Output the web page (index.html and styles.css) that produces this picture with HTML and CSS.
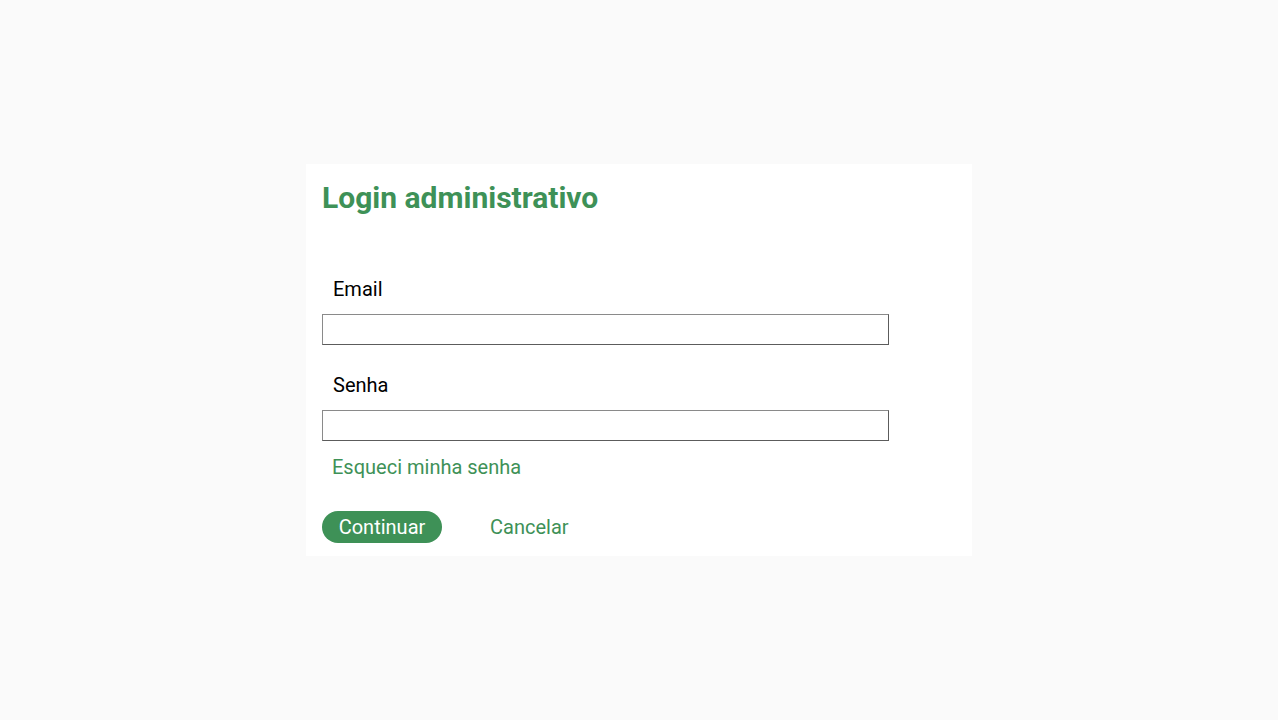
FILE: index.html
```html
<!DOCTYPE html>
<html lang="pt">
<head>
<meta charset="utf-8">
<title>Login administrativo</title>
<link rel="stylesheet" href="styles.css">
</head>
<body>
<main class="page">
  <form class="card">
    <h1 class="title">Login administrativo</h1>
    <div class="fields">
      <label class="label" for="email">Email</label>
      <input class="input" id="email" type="email">
      <label class="label" for="senha">Senha</label>
      <input class="input" id="senha" type="password">
      <a class="forgot" href="#">Esqueci minha senha</a>
    </div>
    <div class="actions">
      <button class="btn-primary" type="button">Continuar</button>
      <button class="btn-link" type="button">Cancelar</button>
    </div>
  </form>
</main>
</body>
</html>
```
FILE: styles.css
```css
html, body {
  margin: 0;
  padding: 0;
  background: #fafafa;
  font-family: Roboto, "Liberation Sans", sans-serif;
}
.page {
  height: 720px;
  display: flex;
  justify-content: center;
  align-items: flex-start;
  padding-top: 164px;
  box-sizing: border-box;
}
.card {
  width: 666px;
  height: 392px;
  box-sizing: border-box;
  background: #ffffff;
  padding: 16px 16px 0 16px;
  display: flex;
  flex-direction: column;
}
.title {
  margin: 0;
  font-size: 30px;
  line-height: 36px;
  font-weight: 700;
  color: #3e9157;
}
.fields {
  display: flex;
  flex-direction: column;
  align-items: flex-start;
  margin-top: 61px;
}
.label {
  font-size: 20px;
  line-height: 24px;
  color: #000;
  padding-left: 11px;
  margin-bottom: 13px;
}
.input {
  width: 567px;
  height: 31px;
  box-sizing: border-box;
  border: 1px solid #5c5c5c;
  border-top-color: #8a8a8a;
  border-left-color: #8a8a8a;
  border-radius: 0;
  background: #fff;
  margin: 0 0 28px 0;
  padding: 0 4px;
  font: inherit;
}
#senha { margin-bottom: 14px; }
.forgot {
  font-size: 20px;
  line-height: 24px;
  color: #3e9157;
  text-decoration: none;
  padding-left: 10px;
}
.actions {
  display: flex;
  align-items: center;
  gap: 48px;
  margin-top: 32px;
}
.btn-primary {
  width: 120px;
  height: 32px;
  padding: 0;
  border: none;
  border-radius: 16px;
  background: #3e9157;
  color: #fff;
  font: inherit;
  font-size: 20px;
  line-height: 32px;
  text-align: center;
  cursor: pointer;
}
.btn-link {
  border: none;
  background: none;
  padding: 0;
  font: inherit;
  font-size: 20px;
  line-height: 32px;
  color: #3e9157;
  cursor: pointer;
}
```
